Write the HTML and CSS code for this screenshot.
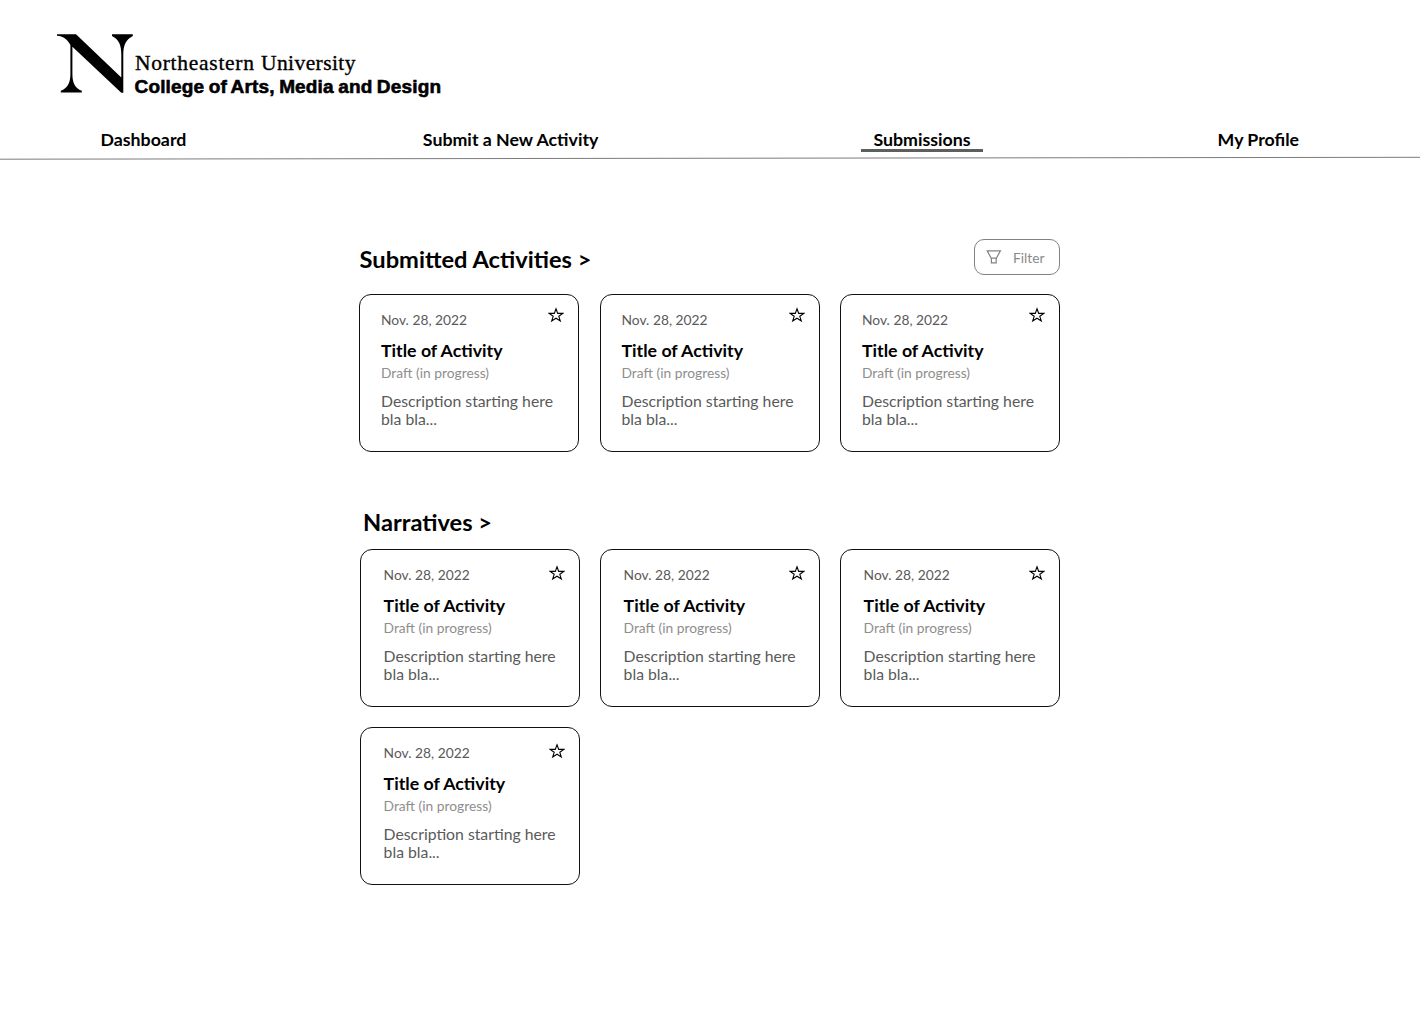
FILE: index.html
```html
<!DOCTYPE html>
<html lang="en">
<head>
<meta charset="utf-8">
<title>Submissions</title>
<link rel="stylesheet" href="styles.css">
</head>
<body>
<svg class="defs" width="0" height="0" aria-hidden="true">
  <symbol id="star" viewBox="0 0 16 16"><path d="M8 1.8 9.7 6.4H14.8L10.8 9.3 12.3 14 8 11.2 3.7 14 5.2 9.3 1.2 6.4H6.3Z" fill="none" stroke="#000" stroke-width="1.1"/></symbol>
</svg>
<header class="header">
  <svg class="logo" width="400" height="70" viewBox="50 30 400 70" role="img" aria-label="Northeastern University College of Arts, Media and Design">
    <path d="M57 34.2H76L121.3 77.5V55C121.3 45 119 39.5 112 36V34.2H132.8V36C126 39.5 123.3 45 123.3 55V92.8H121.3L72.4 46.8V74C72.4 83 75 88 81.8 90.8V92.6H60.8V90.8C67.5 88 70.4 83 70.4 74V45C67 39 63 36 57 35.8Z"/>
    <text class="logo-serif" x="135" y="69.8" textLength="119">Northeastern</text>
    <text class="logo-serif" x="261" y="69.8" textLength="94.5">University</text>
    <text class="logo-sans" x="134.5" y="92.5" textLength="306.5">College of Arts, Media and Design</text>
  </svg>
  <nav class="nav">
    <a class="nav-item">Dashboard</a>
    <a class="nav-item submit">Submit a New Activity</a>
    <a class="nav-item active">Submissions</a>
    <a class="nav-item">My Profile</a>
  </nav>
  <svg class="rule" width="1420" height="4" viewBox="0 0 1420 4"><path d="M0 3.2 1420 1.3" stroke="#7c7c7c" stroke-width="1"/></svg>
</header>
<main class="main">
  <section class="section submitted">
    <div class="section-head">
      <h2 class="heading">Submitted Activities &gt;</h2>
      <button class="filter"><svg width="16" height="16" viewBox="0 0 16 16"><path d="M1.2 1.8H14.4L10.4 9.2H5.2ZM5.4 9.2V13.9H10.2V9.2" fill="none" stroke="#828282" stroke-width="1.2"/></svg><span>Filter</span></button>
    </div>
    <div class="cards">
      <article class="card"><svg class="star"><use href="#star"/></svg><p class="date">Nov. 28, 2022</p><h3 class="title">Title of Activity</h3><p class="status">Draft (in progress)</p><p class="desc">Description starting here bla bla...</p></article>
      <article class="card"><svg class="star"><use href="#star"/></svg><p class="date">Nov. 28, 2022</p><h3 class="title">Title of Activity</h3><p class="status">Draft (in progress)</p><p class="desc">Description starting here bla bla...</p></article>
      <article class="card"><svg class="star"><use href="#star"/></svg><p class="date">Nov. 28, 2022</p><h3 class="title">Title of Activity</h3><p class="status">Draft (in progress)</p><p class="desc">Description starting here bla bla...</p></article>
    </div>
  </section>
  <section class="section narratives">
    <h2 class="heading">Narratives &gt;</h2>
    <div class="cards">
      <article class="card"><svg class="star"><use href="#star"/></svg><p class="date">Nov. 28, 2022</p><h3 class="title">Title of Activity</h3><p class="status">Draft (in progress)</p><p class="desc">Description starting here bla bla...</p></article>
      <article class="card"><svg class="star"><use href="#star"/></svg><p class="date">Nov. 28, 2022</p><h3 class="title">Title of Activity</h3><p class="status">Draft (in progress)</p><p class="desc">Description starting here bla bla...</p></article>
      <article class="card"><svg class="star"><use href="#star"/></svg><p class="date">Nov. 28, 2022</p><h3 class="title">Title of Activity</h3><p class="status">Draft (in progress)</p><p class="desc">Description starting here bla bla...</p></article>
      <article class="card"><svg class="star"><use href="#star"/></svg><p class="date">Nov. 28, 2022</p><h3 class="title">Title of Activity</h3><p class="status">Draft (in progress)</p><p class="desc">Description starting here bla bla...</p></article>
    </div>
  </section>
</main>
</body>
</html>
```
FILE: styles.css
```css
* { box-sizing: border-box; }
body { margin: 0; background: #fff; color: #000; font-family: Lato, sans-serif; }
h2, h3, p { margin: 0; }
.defs { display: block; height: 0; }
.header { padding-top: 30px; }
.logo { display: block; margin-left: 50px; }
.logo-serif { font: 21.5px "Liberation Serif", serif; stroke: #000; stroke-width: .35px; }
.logo-sans { font: bold 19px "Liberation Sans", sans-serif; word-spacing: -1px; stroke: #000; stroke-width: .6px; }
.nav { display: flex; height: 56px; padding: 29px 0 0 100.5px; }
.nav-item { height: 23px; font-size: 17.75px; font-weight: 700; line-height: 21px; white-space: nowrap; }
.nav-item.submit { margin-left: 236.5px; }
.nav-item.active { margin: 0 235px 0 263px; padding: 0 12px; border-bottom: 3px solid #5c5f5e; }
.rule { display: block; }
.main { width: 701px; margin-left: 359px; }
.submitted { padding-top: 79px; }
.section-head { display: flex; justify-content: space-between; height: 55px; }
.heading { font-size: 23.67px; font-weight: 700; line-height: 29px; }
.submitted .heading { padding: 6px 0 0 .6px; }
.filter { display: flex; align-items: center; gap: 11px; width: 86px; height: 36px; padding: 0 0 0 11px; border: 1px solid #828282; border-radius: 10px; background: #fff; color: #8a8a8a; font: 13.8px Lato, sans-serif; }
.filter svg { margin-top: -1px; }
.filter span { padding-top: 1px; }
.cards { display: grid; grid-template-columns: repeat(3, 220px); column-gap: 20.5px; row-gap: 20px; }
.card { position: relative; height: 158px; padding: 16px 10px 0 21px; border: 1px solid #111; border-radius: 12px; }
.star { position: absolute; top: 12px; right: 14px; width: 16px; height: 16px; }
.date { color: #5a5a5a; font-size: 13.8px; line-height: 17px; }
.title { margin-top: 11px; font-size: 17.75px; font-weight: 700; line-height: 22px; }
.status { margin-top: 3px; color: #8e8e8e; font-size: 13.8px; line-height: 17px; }
.desc { margin-top: 11px; width: 180px; color: #5a5a5a; font-size: 15.78px; line-height: 18px; }
.narratives { padding: 56px 0 0 1px; }
.narratives .heading { height: 41px; padding-left: 3px; }
.narratives .cards { column-gap: 20px; }
.narratives .card { padding-left: 22.6px; }
.narratives .star { top: 15px; }
```
